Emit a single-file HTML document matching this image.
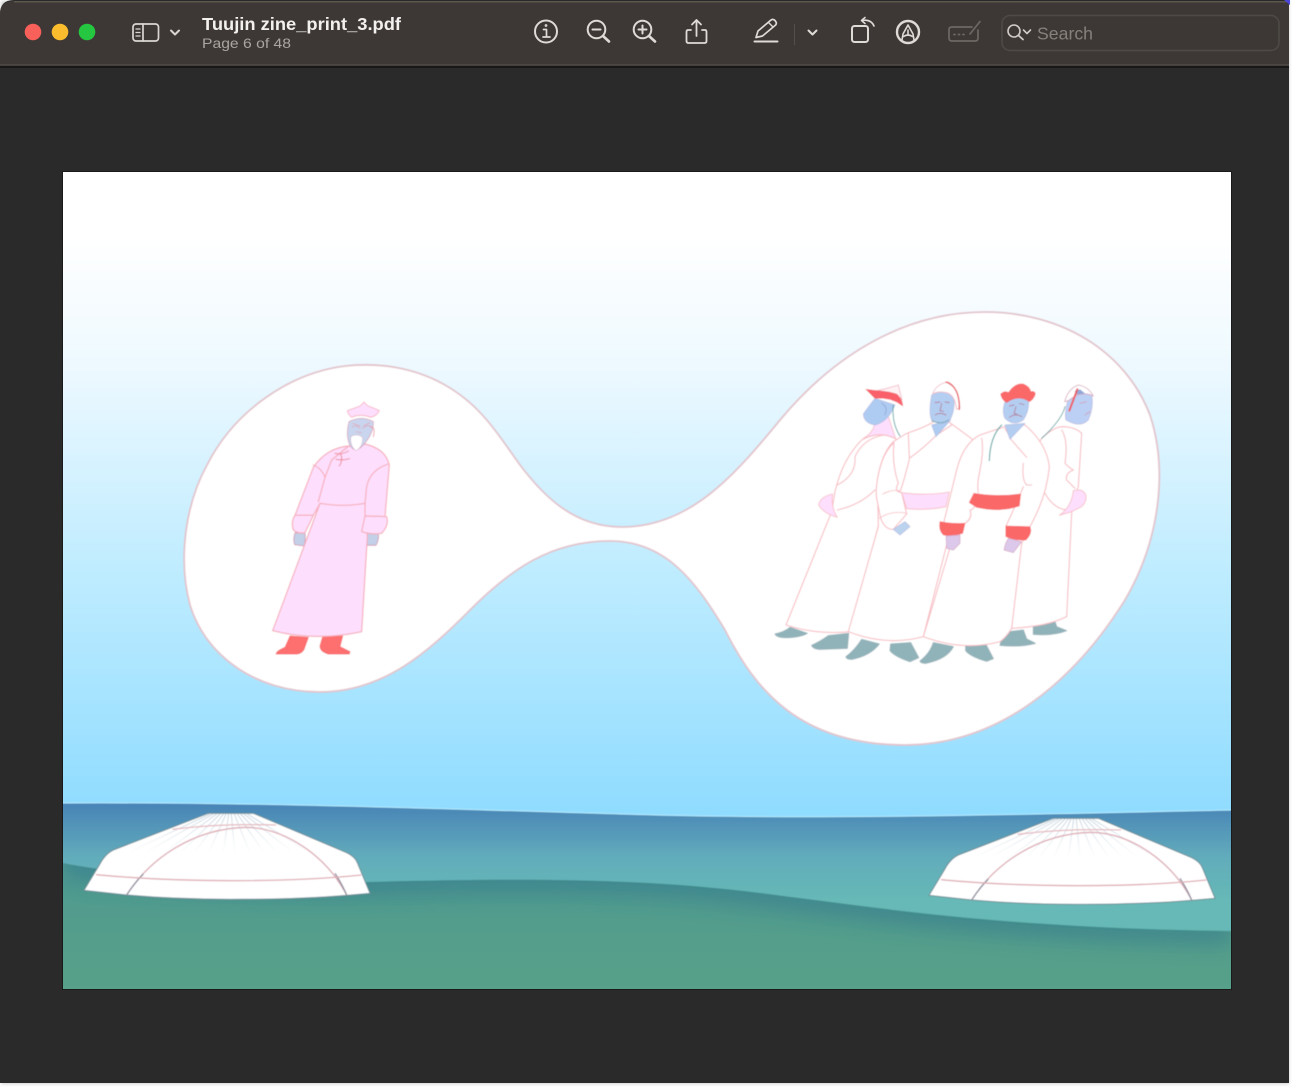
<!DOCTYPE html>
<html><head><meta charset="utf-8"><style>
html,body{margin:0;padding:0;background:#fff;width:1297px;height:1091px;overflow:hidden}
svg{display:block}
text{font-family:"Liberation Sans",sans-serif}
</style></head><body>
<svg width="1297" height="1091" viewBox="0 0 1297 1091" xmlns="http://www.w3.org/2000/svg">
<defs>
<linearGradient id="sky" gradientUnits="userSpaceOnUse" x1="0" y1="172" x2="0" y2="810">
<stop offset="0" stop-color="#ffffff"/><stop offset=".1" stop-color="#ffffff"/><stop offset=".3" stop-color="#eef9ff"/><stop offset=".6" stop-color="#c2edff"/><stop offset="1" stop-color="#90dcff"/></linearGradient>
<linearGradient id="back" gradientUnits="userSpaceOnUse" x1="0" y1="805" x2="0" y2="900">
<stop offset="0" stop-color="#4985b7"/><stop offset=".55" stop-color="#62acbb"/><stop offset="1" stop-color="#66b9b6"/></linearGradient>
<linearGradient id="front" gradientUnits="userSpaceOnUse" x1="0" y1="870" x2="0" y2="989">
<stop offset="0" stop-color="#4f9a90"/><stop offset="1" stop-color="#58a189"/></linearGradient>
<clipPath id="hillclip"><path d="M63,863 C120,875 240,884 367,882 C520,878 640,878 760,893 C880,908 1000,928 1231,931 V989 H63 Z"/></clipPath>
<clipPath id="pageclip"><rect x="63" y="172" width="1168" height="817"/></clipPath>
<filter id="bl" x="-10%" y="-200%" width="120%" height="500%"><feGaussianBlur stdDeviation="11"/></filter>
<filter id="sh" x="-5%" y="-5%" width="110%" height="110%"><feGaussianBlur stdDeviation="1.5"/></filter>
<filter id="soft" x="-2%" y="-2%" width="104%" height="104%"><feGaussianBlur stdDeviation=".55"/></filter>
<filter id="soft2" x="-2%" y="-20%" width="104%" height="140%"><feGaussianBlur stdDeviation=".35"/></filter>
<linearGradient id="ray" gradientUnits="userSpaceOnUse" x1="0" y1="70" x2="0" y2="195">
<stop offset="0" stop-color="#a5bdcf" stop-opacity=".7"/><stop offset="1" stop-color="#c5d5e0" stop-opacity="0"/></linearGradient>
<g id="yurt">
<path d="M72,301 L118,225 Q135,192 160,180 L445,70 L580,70 L860,188 Q885,200 892,218 L930,310 L860,316 Q720,328 510,328 Q350,328 200,315 Z" fill="#fff" stroke="#6f8f98" stroke-width="3"/>
<g fill="none" stroke="url(#ray)" stroke-width="3">
<path d="M460,72 L260,185M470,72 L310,190M480,72 L360,190M490,72 L405,185M498,72 L445,190M506,72 L490,190M514,72 L525,195M523,72 L570,190M532,72 L610,185M542,72 L650,185M552,72 L690,180M562,72 L730,175M450,72 L210,185"/>
</g>
<path d="M338,118 Q480,100 648,105" fill="none" stroke="#e4b9c0" stroke-width="4"/>
<path d="M200,315 C270,205 400,115 560,112 C680,115 800,200 860,315" fill="none" stroke="#dcacb5" stroke-width="4"/>
<path d="M200,315 C215,292 232,270 250,252" fill="none" stroke="#8d8f9f" stroke-width="4"/>
<path d="M825,250 Q845,280 860,315" fill="none" stroke="#8d8f9f" stroke-width="4"/>
<path d="M108,254 Q300,272 520,272 Q740,272 904,255" fill="none" stroke="#dfaeb5" stroke-width="4"/>
</g>
</defs>

<!-- window -->
<rect x="1" y="1" width="1288" height="1083" fill="#cfcfcf" filter="url(#sh)"/>
<path d="M0,14 Q0,0 14,0 H1289 V1083 H0 Z" fill="#2a2a2a"/>
<path d="M0,14 Q0,1 14,1 H1289 V66 H0 Z" fill="#3d3835"/>
<rect x="14" y="1" width="1275" height="1.5" fill="#5c574a"/>
<rect x="0" y="64" width="1289" height="1.5" fill="#4c4743"/>
<rect x="0" y="66" width="1289" height="2" fill="#181818"/>
<path d="M1284,0 H1290 V5 Z" fill="#4a46d8"/>

<g filter="url(#soft2)">
<!-- traffic lights -->
<circle cx="33" cy="32" r="8.3" fill="#f9605a"/>
<circle cx="60" cy="32" r="8.3" fill="#fbbd2e"/>
<circle cx="87" cy="32" r="8.3" fill="#27c740"/>

<!-- sidebar icon -->
<g fill="none" stroke="#d9d5d1" stroke-width="1.7" stroke-linecap="round" stroke-linejoin="round">
<rect x="133" y="24" width="25.5" height="17" rx="3"/>
<path d="M143,24 V41"/>
<path d="M136,29 H140M136,32.5 H140M136,36 H140" stroke-width="1.3"/>
<path d="M171,30.5 L175,34.5 L179,30.5" stroke-width="2"/>
</g>
<text x="202" y="30" font-size="17.5" font-weight="700" fill="#f3f1ef" textLength="199" lengthAdjust="spacingAndGlyphs">Tuujin zine_print_3.pdf</text>
<text x="202" y="48" font-size="14" fill="#a9a5a1" textLength="89" lengthAdjust="spacingAndGlyphs">Page 6 of 48</text>

<!-- toolbar icons -->
<g fill="none" stroke="#dedad6" stroke-width="2" stroke-linecap="round" stroke-linejoin="round">
<circle cx="546" cy="31.5" r="11"/>
<path d="M543.5,29.5 H546.5 V37 M543,37 H550" stroke-width="1.7"/>
<circle cx="546" cy="25.5" r=".6" stroke-width="1.6"/>
<circle cx="596.5" cy="29.5" r="8.8"/>
<path d="M603,36 L609,41.5" stroke-width="2.6"/>
<path d="M592.5,29.5 H600.5" stroke-width="2"/>
<circle cx="642.5" cy="29.5" r="8.8"/>
<path d="M649,36 L655,41.5" stroke-width="2.6"/>
<path d="M638.5,29.5 H646.5 M642.5,25.5 V33.5" stroke-width="2"/>
<path d="M691,30 H688 Q686.5,30 686.5,32 V41 Q686.5,43 688.5,43 H704.5 Q706.5,43 706.5,41 V32 Q706.5,30 705,30 H702" stroke-width="1.8"/>
<path d="M696.5,36 V20.5 M692,24.5 L696.5,20 L701,24.5" stroke-width="1.8"/>
<!-- pencil -->
<path d="M756,37.5 L758,31 L771,20 Q773,18.5 775,20.5 L776,22 Q777,24 775,25.5 L762.5,36 Z" stroke-width="1.7"/>
<path d="M768.5,22.5 L773,27" stroke-width="1.4"/>
<path d="M754.5,41.5 H777.5" stroke-width="2"/>
<path d="M808.5,30.5 L812.5,34.5 L816.5,30.5" stroke-width="2"/>
<!-- rotate -->
<rect x="852" y="26" width="16" height="16" rx="2.5" stroke-width="2"/>
<path d="M862,20.5 Q871,19 874,26" stroke-width="1.6"/>
<path d="M865,17.5 L861.5,20.5 L865,23.5" stroke-width="1.6"/>
<!-- markup -->
<circle cx="908" cy="32" r="11" stroke-width="2.4"/>
<path d="M902,40 L903,34 L908,25 L913,34 L914,40 M903.5,36.5 Q908,33.5 912.5,36.5 M908,30 V34" stroke-width="1.6"/>
</g>
<rect x="794" y="24" width="1" height="21" fill="#55504c"/>
<!-- form icon dim -->
<g fill="none" stroke="#6d6864" stroke-width="1.7" stroke-linecap="round" stroke-linejoin="round">
<path d="M972,27 H952 Q949,27 949,29.5 V38 Q949,41 952,41 H975 Q978,41 978,38 V30"/>
<path d="M970,34 L980,21.5"/>
<path d="M954,34.5 H955 M958.5,34.5 H959.5 M963,34.5 H964" stroke-width="1.8"/>
</g>
<!-- search -->
<rect x="1002" y="15.5" width="277" height="35" rx="8" fill="none" stroke="#4f4a47" stroke-width="1.5"/>
<g fill="none" stroke="#cfcbc7" stroke-width="1.6" stroke-linecap="round" stroke-linejoin="round">
<circle cx="1014" cy="31" r="6"/>
<path d="M1018.5,35.5 L1023,39.5" stroke-width="1.8"/>
<path d="M1023.5,30 L1027,33.5 L1030.5,30"/>
</g>
<text x="1037" y="39.5" font-size="17.5" fill="#84807b" textLength="56" lengthAdjust="spacingAndGlyphs">Search</text>
</g>

<!-- page -->
<rect x="62" y="171" width="1170" height="819" fill="#1a1a1a"/>
<g clip-path="url(#pageclip)">
<g filter="url(#soft)">
<rect x="60" y="170" width="1174" height="822" fill="url(#sky)"/>
<path d="M50,803 L63,803 C250,802 420,808 620,814 C800,820 1000,815 1231,810 L1245,810 V995 H50 Z" fill="url(#back)" stroke="#b6ecff" stroke-width="1"/>
<path d="M50,860 L63,863 C120,875 240,884 367,882 C520,878 640,878 760,893 C880,908 1000,928 1231,931 L1245,931 V995 H50 Z" fill="url(#front)"/>
<g clip-path="url(#hillclip)">
<path d="M63,863 C120,875 240,884 367,882 C520,878 640,878 760,893 C880,908 1000,928 1231,931" fill="none" stroke="#2f7290" stroke-width="24" filter="url(#bl)" opacity=".55"/>
</g>
<g transform="translate(60,790) scale(.33333)"><use href="#yurt"/></g>
<g transform="translate(905,795) scale(.33333)"><use href="#yurt"/></g>

<!-- bubble -->
<path d="M622,527 C575,527 545,498 520,465 C495,430 480,405 445,385 C415,368 380,362 345,366 C290,373 235,410 207,465 C185,505 178,560 190,605 C205,655 255,692 320,692 C385,692 430,650 470,610 C510,570 550,541 610,541 C665,541 695,580 725,630 C755,690 800,745 905,745 C1000,745 1075,680 1125,600 C1160,540 1168,470 1150,415 C1125,350 1060,312 985,312 C900,312 830,360 780,420 C735,475 690,527 622,527 Z" fill="#fff" stroke="#e2c4cc" stroke-width="1.8"/>

<!-- left figure -->
<g transform="translate(250,390) scale(.33333)" stroke-linejoin="round" stroke-linecap="round">
<g fill="#fe6f70" stroke="#f55f62" stroke-width="2">
<path d="M120,738 L175,742 L165,770 Q160,790 140,792 L78,792 Q80,782 105,772 Z"/>
<path d="M218,740 L278,738 L270,770 L300,785 L298,792 L235,792 Q210,785 210,768 Z"/>
</g>
<g fill="#c4cfe8" stroke="#d69bb0" stroke-width="2.5">
<path d="M135,428 Q128,450 134,464 L162,468 Q168,450 165,430 Z"/>
<path d="M338,430 Q335,450 350,466 L378,466 Q388,450 385,430 Z"/>
</g>
<path d="M210,340 L68,722 Q200,755 335,725 L352,440 L345,340 Z" fill="#fddffd" stroke="#f6aebb" stroke-width="3.5"/>
<path d="M296,168 C250,172 215,195 190,232 L135,376 L190,376 L210,340 Q280,352 345,340 L345,378 L405,380 L418,225 C410,190 385,172 345,162 Z" fill="#fddffd" stroke="#f6aebb" stroke-width="3.5"/>
<path d="M190,225 Q215,235 225,262 L205,335 M415,222 Q360,240 350,290 L345,340 M296,168 L245,210 L225,262" fill="none" stroke="#f6aebb" stroke-width="3.5"/>
<path d="M135,376 Q122,395 130,420 Q145,432 165,428 L190,376 Z" fill="#fddffd" stroke="#f6aebb" stroke-width="3.5"/>
<path d="M345,378 L335,425 Q370,435 395,430 Q418,405 410,380 Z" fill="#fddffd" stroke="#f6aebb" stroke-width="3.5"/>
<path d="M255,190 Q275,195 295,183 M258,208 Q280,212 298,206 M268,228 Q280,210 272,192" fill="none" stroke="#ec8a9c" stroke-width="3"/>
<path d="M297,95 Q285,140 302,170 Q318,190 340,165 Q372,130 370,95 Q335,75 297,95 Z" fill="#c9d5ee" stroke="#d69bb0" stroke-width="2"/>
<path d="M302,140 Q320,128 338,142 Q340,170 318,182 Q300,170 302,140 Z" fill="#fff" stroke="#c9a6c0" stroke-width="1.5"/>
<path d="M305,112 Q318,103 330,115 M338,115 Q350,102 362,110 M308,100 L330,108 M340,108 L360,98 M318,125 L335,128" fill="none" stroke="#e0a0b4" stroke-width="2"/>
<path d="M360,110 Q378,110 370,140" fill="none" stroke="#ee8d9c" stroke-width="2.5"/>
<path d="M292,62 Q320,52 330,48 L342,36 L354,48 Q375,55 388,62 Q380,78 362,82 Q330,70 305,82 Q295,75 292,62 Z" fill="#fddffd" stroke="#f6aebb" stroke-width="2.5"/>
</g>

<!-- four men -->
<g transform="translate(760,370) scale(.33333)" stroke-linejoin="round" stroke-linecap="round">
<g fill="#8fb3b9" stroke="#97b2ba" stroke-width="3">
<path d="M45,792 Q75,785 90,772 L142,790 Q120,803 75,803 Q50,802 45,792 Z"/>
<path d="M155,826 Q180,815 205,797 L266,790 L262,835 L178,838 Q158,836 155,826 Z"/>
<path d="M258,860 Q285,840 305,808 L358,822 Q330,858 275,868 Q258,868 258,860 Z"/>
<path d="M392,822 L452,818 L476,863 L450,875 Q405,860 390,842 Z"/>
<path d="M480,873 Q510,850 520,818 L580,830 Q560,868 497,880 Q482,880 480,873 Z"/>
<path d="M617,828 L678,824 L700,866 L680,874 Q632,860 617,842 Z"/>
<path d="M720,826 L730,787 L790,780 L800,807 L826,820 Q780,832 720,826 Z"/>
<path d="M820,770 L885,755 L890,770 L920,782 Q880,798 820,793 Z"/>
</g>
<!-- man 4 (back right) -->
<g fill="#fff" stroke="#f7bcc2" stroke-width="3.2">
<path d="M845,205 Q880,172 905,170 Q945,170 965,190 L955,350 L940,385 L935,430 L920,740 Q860,770 755,775 L790,300 Z"/>
<path d="M905,180 Q925,210 915,280 Q930,295 940,300 Q915,310 920,330 L945,355 M855,370 Q880,415 920,420 L940,400" fill="none"/>
</g>
<path d="M940,362 Q965,355 975,370 Q985,390 965,410 L935,425 L898,436 Q935,410 940,362 Z" fill="#fddffd" stroke="#f7bcc2" stroke-width="2.5"/>
<path d="M925,85 Q912,130 918,150 Q960,175 985,150 Q1002,110 995,75 Q960,60 925,85 Z" fill="#bcd0f5" stroke="#bcb6dc" stroke-width="2"/>
<path d="M914,95 Q925,55 955,45 Q985,50 1000,78 Q965,60 925,92 Z" fill="#fff" stroke="#d8a8bc" stroke-width="2.5"/>
<path d="M945,62 L960,58 L975,70 L945,75 Z" fill="#8fa8d8"/>
<path d="M952,58 L928,122" stroke="#ee5c60" stroke-width="6" fill="none"/>
<path d="M915,110 Q905,150 845,205" fill="none" stroke="#3f9b9a" stroke-width="2.5"/>
<path d="M960,100 L980,95 M975,135 L990,125" fill="none" stroke="#d88aa0" stroke-width="2"/>
<!-- man 1 (back left) -->
<path d="M345,150 Q345,185 310,205 L410,215 L385,140 Z" fill="#fddffd" stroke="#f7bcc2" stroke-width="2.5"/>
<path d="M410,208 C370,185 330,195 305,210 C265,250 240,300 225,365 L215,425 L78,765 Q170,795 270,785 L400,300 Z" fill="#fff" stroke="#f7bcc2" stroke-width="3.2"/>
<path d="M232,345 Q290,315 285,260 Q310,205 372,195 M232,420 Q300,405 345,360" fill="none" stroke="#f7bcc2" stroke-width="3.2"/>
<path d="M218,372 Q180,380 176,405 Q190,430 232,442 Q212,410 218,372 Z" fill="#fddffd" stroke="#f7bcc2" stroke-width="2.5"/>
<path d="M345,85 Q325,110 310,132 Q312,160 345,165 Q385,155 405,105 Z" fill="#aecbf2" stroke="#b6bce0" stroke-width="2"/>
<path d="M365,100 Q385,110 375,135" fill="none" stroke="#8d9fd0" stroke-width="2"/>
<path d="M350,62 Q385,55 415,45 L426,90 L410,72 Z" fill="#fff2f5" stroke="#f0b8c4" stroke-width="2.5"/>
<path d="M318,58 L350,62 Q395,65 412,74 Q428,90 428,108 Q395,80 345,85 Z" fill="#f9616a" stroke="#f05c64" stroke-width="1.5"/>
<path d="M400,105 Q395,160 420,198" fill="none" stroke="#3f9b9a" stroke-width="2.5"/>
<!-- man 2 -->
<path d="M520,155 Q500,170 440,190 L400,215 Q365,250 352,330 L355,470 L265,785 Q380,830 490,800 L640,210 Q600,180 565,155 Z" fill="#fff" stroke="#f7bcc2" stroke-width="3.2"/>
<path d="M445,190 L448,265 Q490,235 530,195 M530,195 L575,165 M420,365 Q430,340 448,268" fill="none" stroke="#f7bcc2" stroke-width="3.2"/>
<path d="M425,368 Q500,378 568,366 L558,410 Q500,422 440,416 Z" fill="#fddffd" stroke="#f7bcc2" stroke-width="2.5"/>
<path d="M402,218 Q365,250 352,330 Q345,370 352,395 L362,445 Q375,480 400,478 L440,432 L425,368 Q400,365 415,340 Q395,280 402,218 Z" fill="#fff" stroke="#f7bcc2" stroke-width="3.2"/>
<path d="M368,372 Q395,358 418,362 M358,445 Q395,420 440,430" fill="none" stroke="#f7bcc2" stroke-width="2.5"/>
<path d="M400,478 L435,455 L450,470 L420,495 Z" fill="#bcd3ef" stroke="#b6bce0" stroke-width="2"/>
<path d="M515,165 L528,200 L572,150 Z" fill="#aecbf2" stroke="#b6bce0" stroke-width="2"/>
<path d="M515,75 Q505,130 515,150 Q545,170 570,150 Q590,110 578,70 Q545,55 515,75 Z" fill="#b4cef2" stroke="#b6bce0" stroke-width="2"/>
<path d="M518,72 Q530,40 565,36 Q595,50 600,115 L590,118 Q585,75 560,68 Q535,62 518,72 Z" fill="#fff" stroke="#f0b8c4" stroke-width="2.5"/>
<path d="M558,36 Q600,50 598,118" fill="none" stroke="#e95a60" stroke-width="4"/>
<path d="M525,98 L540,96 M555,96 L568,98 M545,100 L540,122 L550,124 M525,135 Q540,125 558,135" fill="none" stroke="#b56a80" stroke-width="2.2"/>
<path d="M515,152 Q545,165 565,150" fill="none" stroke="#3f9b9a" stroke-width="2"/>
<!-- man 3 -->
<path d="M735,170 L660,195 Q610,220 590,300 L552,455 L568,540 L490,800 Q610,845 720,815 Q740,800 755,775 L785,520 L810,470 Q860,380 868,290 Q860,220 795,165 Z" fill="#fff" stroke="#f7bcc2" stroke-width="3.2"/>
<path d="M665,205 Q672,240 660,300 Q650,345 655,368 M750,205 L800,262 M790,280 Q785,330 800,345 L815,345 M790,350 Q770,400 738,468 M650,400 Q640,420 630,420 Q640,445 612,462 M750,200 L735,175" fill="none" stroke="#f7bcc2" stroke-width="3.2"/>
<path d="M735,165 L750,208 L795,160 Z" fill="#b4cef2" stroke="#b6bce0" stroke-width="2"/>
<path d="M642,370 Q710,382 782,372 L778,408 Q720,428 650,412 L628,398 Z" fill="#fb6768" stroke="#f05c64" stroke-width="1.5"/>
<path d="M540,455 Q575,462 615,460 L608,490 Q575,500 550,495 Q535,480 540,455 Z" fill="#fb6768" stroke="#f05c64" stroke-width="1.5"/>
<path d="M738,468 L810,470 Q818,490 798,510 Q765,512 738,500 Z" fill="#fb6768" stroke="#f05c64" stroke-width="1.5"/>
<path d="M558,498 L600,495 L600,520 L580,540 L560,535 Z" fill="#dcc8ea" stroke="#d8a8c4" stroke-width="2"/>
<path d="M745,505 L785,515 L760,548 L732,540 Q735,520 745,505 Z" fill="#dcc8ea" stroke="#d8a8c4" stroke-width="2"/>
<path d="M735,95 Q725,125 735,145 Q760,170 790,150 Q810,120 805,85 Q770,70 735,95 Z" fill="#b4cef2" stroke="#b6bce0" stroke-width="2"/>
<path d="M722,72 Q735,60 745,68 Q765,38 790,42 Q810,50 812,65 Q825,62 826,72 Q820,90 808,95 Q775,72 740,98 Q725,90 722,72 Z" fill="#fb6768" stroke="#f05c64" stroke-width="1.5"/>
<path d="M748,108 L762,105 M778,100 L792,104 M768,110 L762,130 L770,132 M748,142 Q768,128 785,140" fill="none" stroke="#b56a80" stroke-width="2.2"/>
<path d="M725,165 Q690,200 688,272" fill="none" stroke="#3f9b9a" stroke-width="3"/>
</g>
</g>
</g>
</svg>
</body></html>
